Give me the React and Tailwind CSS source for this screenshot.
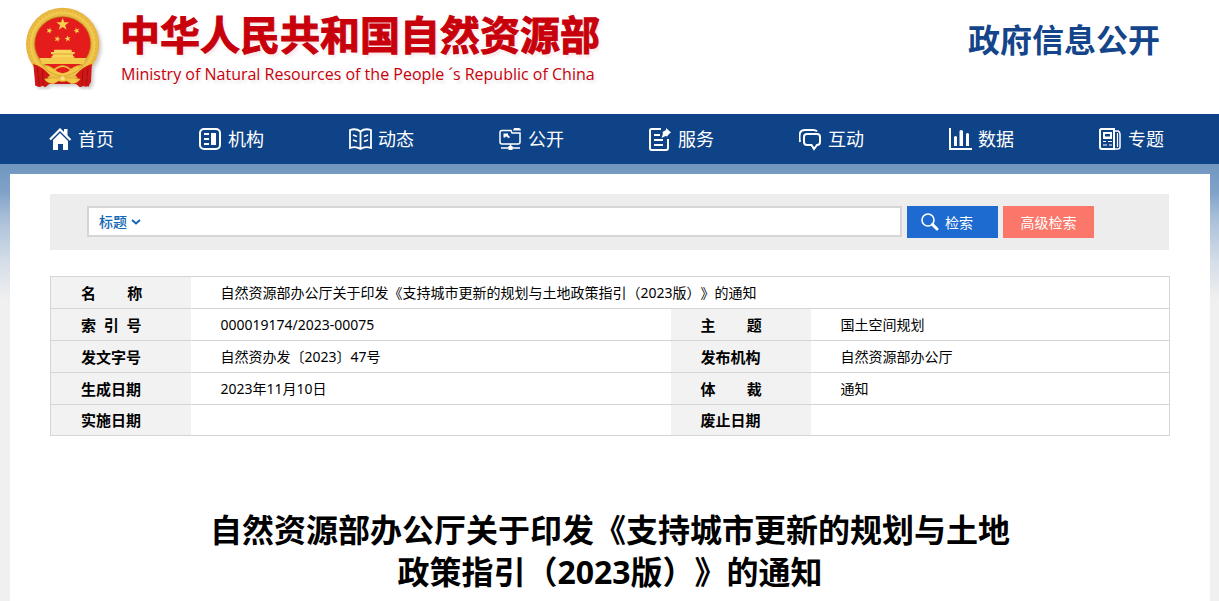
import React from "react";

const star = (cx, cy, r, rot = 0) =>
  Array.from({ length: 10 }, (_, i) => {
    const a = ((rot - 90 + i * 36) * Math.PI) / 180;
    const d = i % 2 ? r * 0.4 : r;
    return `${(cx + d * Math.cos(a)).toFixed(1)},${(cy + d * Math.sin(a)).toFixed(1)}`;
  }).join(" ");

function Emblem() {
  return (
    <svg viewBox="42 18 240 252" className="h-[84px] w-[80px] shrink-0" role="img" aria-label="国徽">
      <defs>
        <radialGradient id="gold" cx="50%" cy="50%" r="50%">
          <stop offset="74%" stopColor="#dba835" />
          <stop offset="86%" stopColor="#f3cb50" />
          <stop offset="100%" stopColor="#e3b03a" />
        </radialGradient>
        <filter id="emblemShadow" x="-10%" y="-10%" width="125%" height="125%">
          <feDropShadow dx="7" dy="7" stdDeviation="5" floodColor="#888" floodOpacity="0.4" />
        </filter>
      </defs>
      <g filter="url(#emblemShadow)">
        <path d="M74 190 L76 254 L84 260 L98 257 L106 262 L118 252 L198 252 L210 262 L224 257 L236 260 L243 244 L240 190 Z" fill="#c91713" />
        <circle cx="158" cy="133" r="110" fill="url(#gold)" />
        <circle cx="158" cy="133" r="100" fill="none" stroke="#c98f21" strokeWidth="3" strokeDasharray="5 7" opacity=".4" />
        <ellipse cx="158" cy="131" rx="84" ry="81" fill="#e41a1c" stroke="#b98218" strokeWidth="2" />
        <path d="M70 192 Q96 198 120 226 L108 236 L106 261 L98 257 L90 261 L76 257 Z M246 192 Q220 198 196 226 L206 236 L208 261 L218 257 L228 261 L243 246 Z" fill="#d01814" />
        <path d="M82 202 L88 256 M97 210 L100 254 M234 202 L228 256 M219 210 L216 254" stroke="#a80f0f" strokeWidth="3" fill="none" />
        <path d="M88 174 H124 V169 H193 V174 H229 L220 192 H97 Z" fill="#f3ca4c" />
        <path d="M132 149 H185 V156 H194 V162 H189 V171 H128 V162 H123 V156 H132 Z" fill="#f9d65b" />
        <path d="M127 162 H190" stroke="#c98f21" strokeWidth="2" />
        <path d="M100 197 Q116 193 132 207 Q144 197 157 196 Q171 197 183 207 Q200 193 219 197 Q202 218 184 222 Q171 229 158 229 Q144 229 132 222 Q113 218 100 197 Z" fill="#f3c746" stroke="#c98f21" strokeWidth="2" />
        <path d="M136 210 Q147 201 158 201 Q169 201 180 210 Q170 220 158 220 Q146 220 136 210 Z" fill="#e41a1c" />
        <path d="M103 237 Q125 232 143 235 Q158 227 173 235 Q191 232 211 237 Q202 251 185 252 L170 243 Q158 247 146 243 L130 252 Q111 250 103 237 Z" fill="#f3c746" stroke="#c98f21" strokeWidth="1" />
        <circle cx="158" cy="235" r="6" fill="#fbe28a" />
        <g fill="#f7d050">
          <polygon points={star(158, 73, 20)} />
          <polygon points={star(118, 92, 10, 20)} />
          <polygon points={star(200, 92, 10, -20)} />
          <polygon points={star(142, 117, 10, 15)} />
          <polygon points={star(173, 116, 10, -10)} />
        </g>
      </g>
    </svg>
  );
}

const line = { fill: "none", stroke: "currentColor", strokeWidth: 1.8 };

const nav = [
  ["首页", (
    <>
      <path d="M1 11.5 L11 1.5 L21.500 12" fill="none" stroke="currentColor" strokeWidth="2.2" />
      <path d="M15 1h3.500v8l-3.500-3.500z M11 5 L19 13 V22 H14 V16 H9 V22 H4 V12 Z" fill="currentColor" />
    </>
  )],
  ["机构", (
    <>
      <rect x="1" y="1" width="20" height="20" rx="4" {...line} strokeWidth="2" />
      <path d="M5 5h5v2H5z M5 10h5v2H5z M5 15h5v2H5z M12 5h5v12h-5z" fill="currentColor" />
    </>
  )],
  ["动态", (
    <>
      <path d="M11.5 3.5 Q7 0 1 2 V20 Q7 18 11.5 21 Q16 18 22 20 V2 Q16 0 11.5 3.5 V20" {...line} />
      <path d="M4 7 l4 1.5 M4 12 l4 1.5 M19 7 l-4 1.5 M19 12 l-4 1.5" {...line} />
    </>
  )],
  ["公开", (
    <>
      <path d="M12 2.5 H3 Q1 2.5 1 4.5 V14 Q1 16 3 16 H19 Q21 16 21 14 V5 H13 Z" {...line} strokeWidth="1.500" />
      <path d="M14 2.500 L15 0 H20 Q22 0 22 2.500 Z M4.500 5.500h4.500v1.500l2 2-1.300 1.300L7.500 8.500H6.500v1H4.500z M9.500 18h4v4h-4z" fill="currentColor" />
      <path d="M11.5 16v3 M2 20h8 M13 20h8" {...line} strokeWidth="1.500" />
    </>
  )],
  ["服务", (
    <>
      <path d="M12 1 H2.500 Q1 1 1 2.500 V20 Q1 22 2.500 22 H17 Q19 22 19 20 V11" {...line} strokeWidth="2" />
      <path d="M5 7h6 M5 12h9 M5 17h9" {...line} strokeWidth="2" />
      <path d="M17 0 L22 4.500 L20.500 5.500 L18 8.500 L16.500 8 L12.500 10 L14 5.500 L13.500 4 L17 2 Z" fill="currentColor" />
    </>
  )],
  ["互动", (
    <>
      <path d="M1 14 Q0 9 1 5 Q2 2 6 2 H14 Q17 2 18 3.500" {...line} strokeWidth="2" />
      <path d="M8 6 H18 Q21 6 21 9 V14 Q21 17 18 17 L15 21 L12.500 17 H8 Q5 17 5 14 V9 Q5 6 8 6 Z" {...line} strokeWidth="2" />
    </>
  )],
  ["数据", (
    <path d="M0 0h2v20h21v2H0z M5 9 q1.500 -2 3 0 v9 H5z M10.500 3 q1.750 -2 3.500 0 v15 h-3.500z M17 6 q1.500 -2 3 0 v12 h-3z" fill="currentColor" />
  )],
  ["专题", (
    <>
      <path d="M2 1 H15 V21 H3 Q1 21 1 19 V2 Z" {...line} strokeWidth="2" />
      <path d="M16 3 H19 Q21 4 21 6 V19 Q21 21 18.500 21 H14" {...line} strokeWidth="1.500" />
      <path d="M4 4h9v7H4z" fill="currentColor" />
      <path d="M6 6h5v2.500H6z" fill="#0e4487" />
      <path d="M4 13.500h3 M4 17h4 M9 13.500h4 M10 17h3 M18.500 5v14" {...line} strokeWidth="1.200" />
    </>
  )],
];

const rows = [
  ["索\u00a0\u00a0引\u00a0\u00a0号", "000019174/2023-00075", "主\u00a0\u00a0\u00a0\u00a0\u00a0\u00a0\u00a0\u00a0题", "国土空间规划"],
  ["发文字号", "自然资办发〔2023〕47号", "发布机构", "自然资源部办公厅"],
  ["生成日期", "2023年11月10日", "体\u00a0\u00a0\u00a0\u00a0\u00a0\u00a0\u00a0\u00a0裁", "通知"],
  ["实施日期", "", "废止日期", ""],
];

function Th({ children }) {
  return <th scope="row" className="bg-[#f2f2f2] pl-[30px] text-left text-[15px] font-bold whitespace-nowrap">{children}</th>;
}

export default function App() {
  return (
    <div className="min-h-screen bg-[#f0f0f0] font-['Noto_Sans','Noto_Sans_CJK_SC',sans-serif] text-black [text-spacing-trim:space-all]">
      <header className="bg-white">
        <div className="flex h-[114px] items-start justify-between pr-[59px] pl-6">
          <a href="#home" className="flex pt-1.5">
            <Emblem />
            <span className="flex flex-col pt-0.5 pl-4 text-[#c7000b]">
              <span className="text-[40px] leading-[54px] font-bold whitespace-nowrap [-webkit-text-stroke:1px_#c7000b] [text-shadow:2px_3px_3px_#c7000b1a]">中华人民共和国自然资源部</span>
              <span className="pl-px font-['Open_Sans',sans-serif] text-[16px] leading-[24px] whitespace-nowrap [text-shadow:2px_3px_3px_#0000001a]">Ministry of Natural Resources of the People ´s Republic of China</span>
            </span>
          </a>
          <h2 className="pt-4 text-[32px] leading-[48px] font-bold text-[#14458a]">政府信息公开</h2>
        </div>
      </header>
      <nav className="bg-[#0e4487] pr-[9px] pl-[10px]">
        <ul className="grid grid-cols-8">
          {nav.map(([label, icon]) => (
            <li key={label}>
              <a href={"#" + label} className="flex h-[50px] items-center gap-1.5 pl-[39px] text-[18px] text-white">
                <svg viewBox="0 0 23 23" className="size-[23px]" aria-hidden="true">{icon}</svg>
                {label}
              </a>
            </li>
          ))}
        </ul>
      </nav>
      <div className="bg-[linear-gradient(#7197bf_0px,#80a2c8_28px,#a8bfd8_54px,#d5dde8_98px,#f0f0f0_136px)] pt-2.5 pr-[9px] pl-[10px]">
        <main className="min-h-[427px] bg-white px-10 pt-5 pb-2">
          <form className="mr-px flex h-14 gap-[5px] bg-[#ededed] pt-3 pr-[75px] pl-[37px]" onSubmit={(e) => e.preventDefault()}>
            <div className="flex h-[31px] flex-1 border-2 border-[#d5d5d5] bg-white">
              <label className="flex items-center pl-2.5 text-[#1266b5]">
                <select aria-label="检索范围" className="w-7 appearance-none bg-transparent text-[14px] leading-5 font-medium outline-none">
                  <option>标题</option>
                </select>
                <svg viewBox="0 0 10 8" className="ml-1 h-2 w-2.5" aria-hidden="true">
                  <path d="M1 2 L5 5.500 L9 2" fill="none" stroke="currentColor" strokeWidth="2" />
                </svg>
              </label>
              <input type="text" aria-label="检索词" className="ml-2 min-w-0 flex-1 text-[14px] outline-none" />
            </div>
            <button type="submit" className="flex h-8 w-[91px] items-center gap-1.5 bg-[#1d6ad1] pl-3.5 text-[14px] text-white">
              <svg viewBox="0 0 18 18" className="size-[18px]" aria-hidden="true">
                <circle cx="7" cy="7" r="6" fill="none" stroke="currentColor" strokeWidth="1.600" />
                <path d="M11.500 11.500 L16 16" stroke="currentColor" strokeWidth="3" strokeLinecap="round" />
              </svg>
              检索
            </button>
            <button type="button" className="h-8 w-[91px] bg-[#fa776a] text-[14px] text-white">高级检索</button>
          </form>

          <table className="mt-[26px] w-full table-fixed border-collapse border border-[#d5d5d5] text-[14px] leading-5">
            <colgroup>
              <col className="w-[140px]" />
              <col className="w-[480px]" />
              <col className="w-[140px]" />
              <col />
            </colgroup>
            <tbody>
              <tr className="h-8 border-b border-[#d5d5d5]">
                <Th>{"名\u00a0\u00a0\u00a0\u00a0\u00a0\u00a0\u00a0\u00a0称"}</Th>
                <td colSpan={3} className="pl-[30px]">自然资源部办公厅关于印发《支持城市更新的规划与土地政策指引（2023版）》的通知</td>
              </tr>
              {rows.map(([a, b, c, d]) => (
                <tr key={a} className="h-8 border-b border-[#d5d5d5] last:h-[31px]">
                  <Th>{a}</Th>
                  <td className="pl-[30px]">{b}</td>
                  <Th>{c}</Th>
                  <td className="pl-[30px]">{d}</td>
                </tr>
              ))}
            </tbody>
          </table>

          <h1 className="mx-auto mt-[73px] max-w-[820px] text-center text-[32px] leading-[42px] font-bold">
            自然资源部办公厅关于印发《支持城市更新的规划与土地
            <br />
            政策指引（2023版）》的通知
          </h1>
        </main>
      </div>
    </div>
  );
}
